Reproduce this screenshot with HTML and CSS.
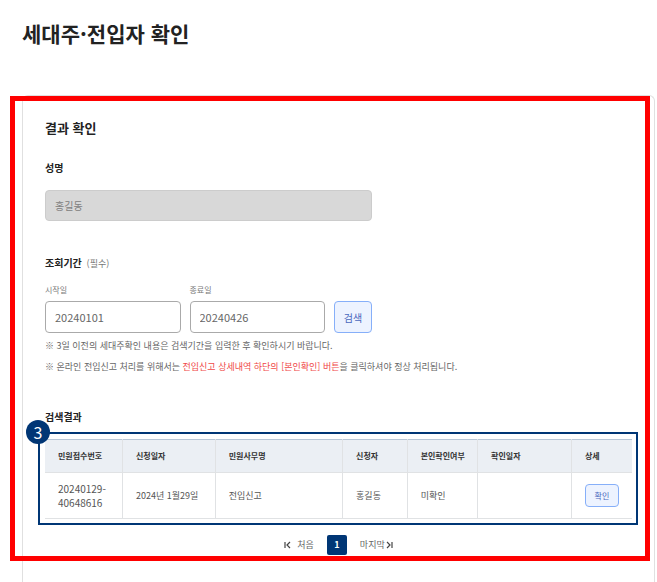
FILE: index.html
```html
<!DOCTYPE html>
<html lang="ko">
<head>
<meta charset="utf-8">
<meta name="viewport" content="width=device-width, initial-scale=1">
<title>세대주·전입자 확인</title>
<link rel="stylesheet" href="styles.css">
</head>
<body>
<h1 class="page-title">세대주·전입자 확인</h1>
<main class="card">
  <div class="card-body">
    <h2 class="card-title">결과 확인</h2>
    <form class="search-form">
      <label class="field-title" for="name">성명</label>
      <input class="text-input name-input" id="name" type="text" value="홍길동" disabled>
      <fieldset class="period">
        <legend class="field-title">조회기간 <span class="required">(필수)</span></legend>
        <div class="period-row">
          <div class="date-field">
            <label for="start">시작일</label>
            <input class="text-input" id="start" type="text" value="20240101">
          </div>
          <div class="date-field">
            <label for="end">종료일</label>
            <input class="text-input" id="end" type="text" value="20240426">
          </div>
          <button class="button search-button" type="button">검색</button>
        </div>
      </fieldset>
    </form>
    <p class="note">※ 3일 이전의 세대주확인 내용은 검색기간을 입력한 후 확인하시기 바랍니다.</p>
    <p class="note">※ 온라인 전입신고 처리를 위해서는 <em>전입신고 상세내역 하단의 [본인확인] 버튼</em>을 클릭하셔야 정상 처리됩니다.</p>
    <h3 class="field-title result-title">검색결과</h3>
    <div class="result">
      <span class="step">3</span>
      <table class="result-table">
        <colgroup>
          <col class="col-number"><col class="col-date"><col class="col-name"><col class="col-person"><col class="col-status"><col class="col-checked"><col class="col-detail">
        </colgroup>
        <thead>
          <tr><th scope="col">민원접수번호</th><th scope="col">신청일자</th><th scope="col">민원사무명</th><th scope="col">신청자</th><th scope="col">본인확인여부</th><th scope="col">확인일자</th><th scope="col">상세</th></tr>
        </thead>
        <tbody>
          <tr><td class="number">20240129-<br>40648616</td><td>2024년 1월29일</td><td>전입신고</td><td>홍길동</td><td>미확인</td><td></td><td><button class="button detail-button" type="button">확인</button></td></tr>
        </tbody>
      </table>
    </div>
    <nav class="pagination" aria-label="페이지">
      <a class="page-move" href="#">
        <svg class="icon" viewBox="0 0 7 8" aria-hidden="true"><path d="M1 1v6M6 1L3 4l3 3"/></svg>
        <span>처음</span>
      </a>
      <a class="page-current" href="#" aria-current="page">1</a>
      <a class="page-move page-last" href="#">
        <span>마지막</span>
        <svg class="icon" viewBox="0 0 7 8" aria-hidden="true"><path d="M6 1v6M1 1l3 3-3 3"/></svg>
      </a>
    </nav>
  </div>
</main>
</body>
</html>
```
FILE: styles.css
```css
* {
  box-sizing: border-box;
}

body {
  display: flex;
  flex-direction: column;
  min-height: 100vh;
  margin: 0;
  background: #fff;
  color: #222;
  font: 9px/16px "Noto Sans CJK KR", "Noto Sans", sans-serif;
}

h1, h2, h3, p {
  margin: 0;
}

button, input {
  font-family: inherit;
}

a {
  color: inherit;
  text-decoration: none;
}

.page-title {
  padding: 17px 22px 46px;
  font-size: 21px;
  line-height: 32px;
}

.card {
  flex: 1;
  margin: 0 2px 0 22px;
  border: 1px solid #e0e0e0;
  border-bottom: 0;
  border-radius: 6px 6px 0 0;
}

.card-body {
  position: relative;
  padding: 22px 22px 6px;
}

.card-body::after {
  content: "";
  position: absolute;
  inset: 0 4px 0 -13px;
  border: 5px solid #f00;
  pointer-events: none;
}

.card-title {
  margin-bottom: 22px;
  font-size: 13px;
  line-height: 20px;
}

.field-title {
  display: block;
  padding: 0;
  font-size: 10px;
  font-weight: 700;
  line-height: 16px;
}

.text-input {
  display: block;
  width: 100%;
  height: 32px;
  padding: 0 9px;
  border: 1px solid #aaa;
  border-radius: 4px;
  background: #fff;
  color: #666;
  font-size: 11px;
}

.name-input {
  max-width: 327px;
  height: 31px;
  margin-top: 14px;
  border-color: #ccc;
  background: #d8d8d8;
  color: #808080;
  font-size: 10px;
}

.period {
  min-width: 0;
  margin: 34px 0 0;
  padding: 0;
  border: 0;
}

.required {
  margin-left: 2px;
  color: #777;
  font-size: 9px;
  font-weight: 400;
}

.period-row {
  display: flex;
  align-items: flex-end;
  gap: 9px;
  max-width: 327px;
  margin-top: 10px;
}

.date-field {
  flex: 1;
}

.date-field label {
  display: block;
  margin-bottom: 3px;
  color: #777;
  font-size: 8px;
}

.button {
  padding: 0;
  border: 1px solid #86aff9;
  border-radius: 4px;
  background: #edf3ff;
  color: #4a68bd;
}

.search-button {
  width: 38px;
  height: 32px;
  font-size: 10px;
}

.note {
  margin-top: 5px;
  color: #666;
}

.note em {
  color: #f04848;
  font-style: normal;
}

.result-title {
  margin-top: 34px;
}

.result {
  position: relative;
  margin-top: 14px;
}

.result::before {
  content: "";
  position: absolute;
  inset: -7px -6px -6px -7px;
  border: 2px solid #003675;
  pointer-events: none;
}

.step {
  position: absolute;
  top: -19px;
  left: -19px;
  width: 24px;
  height: 24px;
  border-radius: 50%;
  background: #003675;
  color: #fff;
  font-size: 16px;
  line-height: 24px;
  text-align: center;
}

.result-table {
  width: 100%;
  border-collapse: collapse;
  border-top: 1px solid #b8c6d6;
  table-layout: fixed;
}

.result-table th, .result-table td {
  padding: 0 0 0 13px;
  border-right: 1px solid #e0e2e4;
  border-bottom: 1px solid #e0e2e4;
  text-align: left;
  white-space: nowrap;
}

.result-table th:last-child, .result-table td:last-child {
  border-right: 0;
}

.result-table th {
  height: 33px;
  background: #ebeff4;
  color: #333;
  font-size: 8px;
}

.result-table td {
  height: 46px;
  color: #555;
  line-height: 14px;
}

.result-table .number {
  font-size: 10px;
}

.col-number { width: 13.2%; }
.col-date { width: 15.8%; }
.col-name { width: 21.7%; }
.col-person { width: 11%; }
.col-status { width: 12%; }
.col-checked { width: 16%; }
.col-detail { width: 10.3%; }

.detail-button {
  display: block;
  width: 34px;
  height: 23px;
  font-size: 8px;
}

.pagination {
  display: flex;
  justify-content: center;
  align-items: center;
  gap: 13px;
  margin-top: 16px;
}

.page-move {
  display: flex;
  align-items: center;
  gap: 6px;
  color: #666;
}

.page-last {
  gap: 1px;
}

.icon {
  width: 7px;
  height: 8px;
  fill: none;
  stroke: #444;
  stroke-width: 1.2;
}

.page-current {
  width: 20px;
  border-radius: 2px;
  background: #003675;
  color: #fff;
  font-weight: 700;
  line-height: 20px;
  text-align: center;
}
```
